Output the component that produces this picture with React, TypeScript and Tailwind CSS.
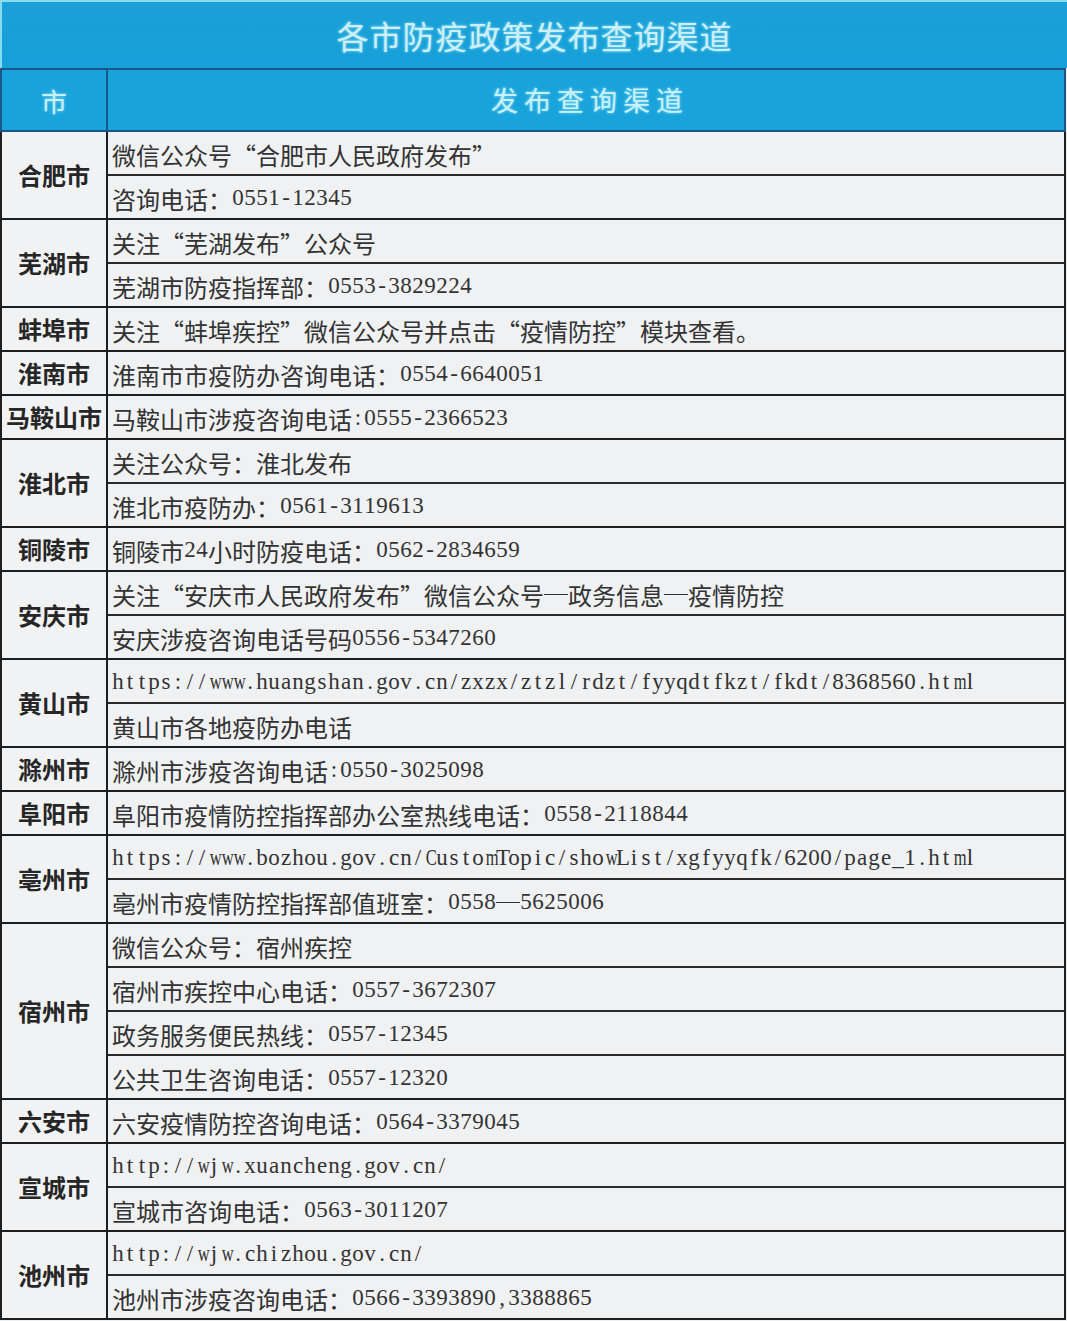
const rows: { city: string; lines: string[] }[] = [
  { city: '合肥市', lines: ['微信公众号“合肥市人民政府发布”', '咨询电话：0551-12345'] },
  { city: '芜湖市', lines: ['关注“芜湖发布”公众号', '芜湖市防疫指挥部：0553-3829224'] },
  { city: '蚌埠市', lines: ['关注“蚌埠疾控”微信公众号并点击“疫情防控”模块查看。'] },
  { city: '淮南市', lines: ['淮南市市疫防办咨询电话：0554-6640051'] },
  { city: '马鞍山市', lines: ['马鞍山市涉疫咨询电话:0555-2366523'] },
  { city: '淮北市', lines: ['关注公众号：淮北发布', '淮北市疫防办：0561-3119613'] },
  { city: '铜陵市', lines: ['铜陵市24小时防疫电话：0562-2834659'] },
  { city: '安庆市', lines: ['关注“安庆市人民政府发布”微信公众号—政务信息—疫情防控', '安庆涉疫咨询电话号码0556-5347260'] },
  {
    city: '黄山市',
    lines: ['https://www.huangshan.gov.cn/zxzx/ztzl/rdzt/fyyqdtfkzt/fkdt/8368560.html', '黄山市各地疫防办电话'],
  },
  { city: '滁州市', lines: ['滁州市涉疫咨询电话:0550-3025098'] },
  { city: '阜阳市', lines: ['阜阳市疫情防控指挥部办公室热线电话：0558-2118844'] },
  {
    city: '亳州市',
    lines: ['https://www.bozhou.gov.cn/CustomTopic/showList/xgfyyqfk/6200/page_1.html', '亳州市疫情防控指挥部值班室：0558—5625006'],
  },
  {
    city: '宿州市',
    lines: ['微信公众号：宿州疾控', '宿州市疾控中心电话：0557-3672307', '政务服务便民热线：0557-12345', '公共卫生咨询电话：0557-12320'],
  },
  { city: '六安市', lines: ['六安疫情防控咨询电话：0564-3379045'] },
  { city: '宣城市', lines: ['http://wjw.xuancheng.gov.cn/', '宣城市咨询电话：0563-3011207'] },
  { city: '池州市', lines: ['http://wjw.chizhou.gov.cn/', '池州市涉疫咨询电话：0566-3393890,3388865'] },
];

const wide = 'mwMWC';

// latin chars sit in half-width cells, like the song-style font of the original
function Mixed({ text }: { text: string }) {
  return (
    <>
      {Array.from(text).map((c, i) => {
        const code = c.charCodeAt(0);
        if (code >= 0x20 && code <= 0x7e) {
          return (
            <span
              key={i}
              className={`inline-block w-[12px] text-center font-['Liberation_Serif',serif] text-[23px] ${
                wide.includes(c) ? 'scale-x-[0.72]' : ''
              }`}
            >
              {c}
            </span>
          );
        }
        if (c === '—') {
          return (
            <span key={i} className="inline-block w-[24px] h-[24px] align-middle relative">
              <span className="absolute left-0 right-0 top-[11px] h-[1.5px] bg-[#333]" />
            </span>
          );
        }
        return <span key={i}>{c}</span>;
      })}
    </>
  );
}

export default function App() {
  return (
    <div className="w-[1067px] h-[1321px] bg-[#eef0f1] font-['Noto_Sans_CJK_SC',sans-serif] overflow-hidden">
      <div className="h-[68px] bg-gradient-to-b from-[#1c9fd6] to-[#16a0d9] border-t-2 border-l-2 border-[#86dcef] flex items-center justify-center">
        <span className="text-[32px] text-[#cdeff9] tracking-[1px] [text-shadow:0_0_3px_#8fe3f7]">
          各市防疫政策发布查询渠道
        </span>
      </div>

      <div className="h-[64px] flex bg-[#19a3db] border-y-2 border-[#1b5686] border-l-2 w-[1066px] border-r-2">
        <div className="w-[106px] border-r-2 border-[#1b5686] flex items-center justify-center">
          <span className="text-[26px] text-[#c9f1fb] [text-shadow:0_0_3px_#8fe3f7]">市</span>
        </div>
        <div className="flex-1 flex items-center justify-center pl-[8px]">
          <span className="text-[27px] text-[#c9f1fb] tracking-[6px] [text-shadow:0_0_3px_#8fe3f7]">发布查询渠道</span>
        </div>
      </div>

      <div className="w-[1066px] border-l-2 border-r-2 border-[#1e1e1e]">
        {rows.map((r) => (
          <div key={r.city} className="flex border-b-2 border-[#1e1e1e]">
            <div className="w-[106px] border-r-2 border-[#1e1e1e] flex items-center justify-center bg-[#f1f2f3]">
              <span className="text-[24px] font-bold text-[#262626] whitespace-nowrap">{r.city}</span>
            </div>
            <div className="flex-1">
              {r.lines.map((l, i) => (
                <div
                  key={i}
                  className={`h-[42px] flex items-center pl-[4px] pt-[3px] text-[24px] text-[#333333] whitespace-nowrap bg-[#eff1f2] ${
                    i < r.lines.length - 1 ? 'border-b-2 border-[#2a2a2a] h-[44px]' : ''
                  }`}
                >
                  <Mixed text={l} />
                </div>
              ))}
            </div>
          </div>
        ))}
      </div>
    </div>
  );
}
